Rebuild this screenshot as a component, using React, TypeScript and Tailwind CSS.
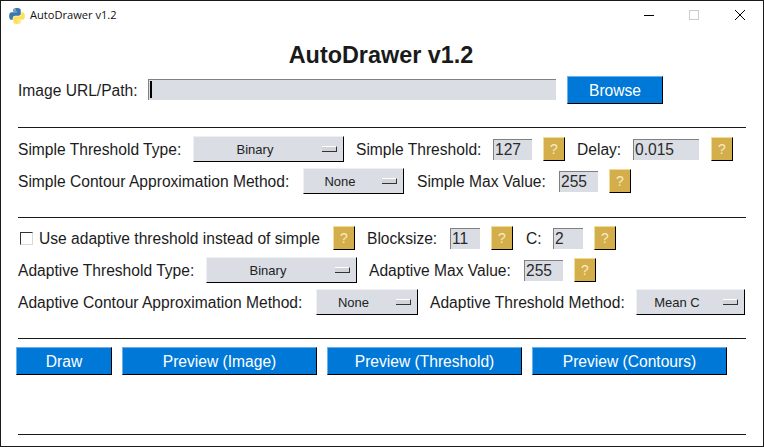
import type { ReactNode } from "react";

// Tk-style raised button, blue or gold
function Button({ children, className }: { children: ReactNode; className: string }) {
  return (
    <button className={`h-[28px] pt-px bg-[#0078d7] border-t border-l border-t-[#6cb0ea] border-l-[#6cb0ea] border-b border-r border-b-black border-r-black text-white text-[15.6px] leading-none ${className}`}>
      {children}
    </button>
  );
}

function Help({ className = "" }: { className?: string }) {
  return (
    <button className={`w-[22px] h-[24px] shrink-0 bg-[#d4ae4b] border-t border-l border-t-[#f0dc95] border-l-[#f0dc95] border-b border-r border-b-black border-r-black text-[#f6ecc9] text-[14px] leading-none ${className}`}>
      ?
    </button>
  );
}

function Label({ children, className }: { children: ReactNode; className: string }) {
  return <span className={`shrink-0 whitespace-nowrap pt-[2px] text-[15.6px] leading-none text-[#1c1c1c] ${className}`}>{children}</span>;
}

function Entry({ value, className }: { value: string; className: string }) {
  return (
    <div className={`h-[21px] shrink-0 bg-[#dadde4] border-t border-l border-t-[#808080] border-l-[#808080] pl-px text-[15.6px] leading-[20px] text-[#2a2a2a] ${className}`}>
      {value}
    </div>
  );
}

function Dropdown({ value, className }: { value: string; className: string }) {
  return (
    <div className={`h-[26px] shrink-0 flex items-center bg-[#dadde4] border-t border-l border-t-[#eef0f3] border-l-[#eef0f3] border-b border-r border-b-black border-r-black text-[13px] text-[#222222] ${className}`}>
      <span className="flex-1 pt-px text-center">{value}</span>
      <span className="w-[15px] h-[6px] mx-[6px] bg-[#d2d4d9] border-t border-t-white border-b border-b-[#333333] border-r border-r-[#333333]" />
    </div>
  );
}

function Rule({ className }: { className: string }) {
  return <div className={`h-px w-[728px] ml-[17px] bg-[#1a1a1a] ${className}`} />;
}

function PythonIcon() {
  const half =
    "M54.9 0c-4.6 0-8.9.4-12.7 1.1C31 3.1 29 7.2 29 14.9V25h26v3.4H19.2c-7.6 0-14.2 4.6-16.3 13.2-2.4 9.9-2.5 16.1 0 26.4C4.8 75.7 9.2 81.2 16.8 81.2h9V69.3c0-8.6 7.4-16.2 16.3-16.2h26c7.2 0 13-6 13-13.2V14.9c0-7-5.9-12.3-13-13.5C63.7.6 59 0 54.9 0zM40.8 8c2.7 0 4.9 2.2 4.9 4.9s-2.2 4.9-4.9 4.9-4.9-2.2-4.9-4.9S38.1 8 40.8 8z";
  return (
    <svg viewBox="0 0 110 110" className="w-[16px] h-[16px] shrink-0">
      <path d={half} fill="#3b78aa" fillRule="evenodd" />
      <path d={half} fill="#ffdf5c" fillRule="evenodd" transform="rotate(180 55 55)" />
    </svg>
  );
}

function TitleBar() {
  return (
    <div className="h-[29px] flex items-center pl-[8px]">
      <PythonIcon />
      <span className="ml-[5px] text-[11.1px] text-[#111111] [font-family:'Open_Sans',sans-serif]">AutoDrawer v1.2</span>
      <svg viewBox="0 0 110 12" className="w-[110px] h-[12px] ml-auto mr-[9px] mt-[-1px]" fill="none">
        <path d="M0 6.5h10" stroke="#000000" />
        <rect x="45.5" y="1.5" width="9" height="9" stroke="#cccccc" />
        <path d="M91 1l10 10M101 1L91 11" stroke="#000000" />
      </svg>
    </div>
  );
}

export default function App() {
  return (
    <div className="w-[764px] h-[447px] flex flex-col bg-white border border-[#1a1a1a] overflow-hidden [font-family:'Liberation_Sans',Arial,sans-serif]">
      <TitleBar />

      <h1 className="h-[46px] pt-[6px] pr-[2px] flex items-center justify-center text-[23.4px] font-bold text-[#1a1a1a]">AutoDrawer v1.2</h1>

      <div className="h-[28px] flex items-center pl-[17px]">
        <Label className="w-[118px]">Image URL/Path:</Label>
        <div className="ml-[12px] w-[408px] h-[21px] mt-[-1px] bg-[#dadde4] border-t border-l border-t-[#808080] border-l-[#808080] pl-px pt-px">
          <div className="w-[2px] h-[17px] bg-black" />
        </div>
        <Button className="ml-[11px] w-[96px]">Browse</Button>
      </div>

      <Rule className="mt-[23px]" />

      <div className="mt-[8px] h-[26px] flex items-center gap-[12px] pl-[17px]">
        <Label className="w-[163px]">Simple Threshold Type:</Label>
        <Dropdown value="Binary" className="w-[151px]" />
        <Label className="w-[125px]">Simple Threshold:</Label>
        <Entry value="127" className="w-[39px]" />
        <Help className="-ml-px" />
        <Label className="w-[44px]">Delay:</Label>
        <Entry value="0.015" className="w-[66px]" />
        <Help />
      </div>

      <div className="mt-[6px] h-[26px] flex items-center gap-[12px] pl-[17px]">
        <Label className="w-[273px]">Simple Contour Approximation Method:</Label>
        <Dropdown value="None" className="w-[101px]" />
        <Label className="ml-px w-[130px]">Simple Max Value:</Label>
        <Entry value="255" className="w-[39px]" />
        <Help className="-ml-px" />
      </div>

      <Rule className="mt-[23px]" />

      <div className="mt-[7px] h-[26px] flex items-center pl-[19px]">
        <span className="w-[13px] h-[13px] shrink-0 bg-white border border-t-[#333333] border-l-[#333333] border-b-[#d9d9d9] border-r-[#d9d9d9]" />
        <Label className="ml-[6px] w-[281px]">Use adaptive threshold instead of simple</Label>
        <Help className="ml-[13px]" />
        <Label className="ml-[12px] w-[70px]">Blocksize:</Label>
        <Entry value="11" className="ml-[13px] w-[30px]" />
        <Help className="ml-[11px]" />
        <Label className="ml-[13px] w-[15px]">C:</Label>
        <Entry value="2" className="ml-[12px] w-[30px]" />
        <Help className="ml-[11px]" />
      </div>

      <div className="mt-[6px] h-[26px] flex items-center gap-[12px] pl-[17px]">
        <Label className="w-[176px]">Adaptive Threshold Type:</Label>
        <Dropdown value="Binary" className="w-[151px]" />
        <Label className="w-[143px]">Adaptive Max Value:</Label>
        <Entry value="255" className="w-[39px]" />
        <Help className="-ml-px" />
      </div>

      <div className="mt-[6px] h-[26px] flex items-center gap-[12px] pl-[17px]">
        <Label className="w-[286px]">Adaptive Contour Approximation Method:</Label>
        <Dropdown value="None" className="w-[102px]" />
        <Label className="w-[194px]">Adaptive Threshold Method:</Label>
        <Dropdown value="Mean C" className="w-[109px]" />
      </div>

      <Rule className="mt-[23px]" />

      <div className="mt-[8px] flex gap-[10px] pl-[15px]">
        <Button className="w-[96px]">Draw</Button>
        <Button className="w-[195px]">Preview (Image)</Button>
        <Button className="w-[195px]">Preview (Threshold)</Button>
        <Button className="w-[195px]">Preview (Contours)</Button>
      </div>

      <Rule className="mt-[59px]" />
    </div>
  );
}
